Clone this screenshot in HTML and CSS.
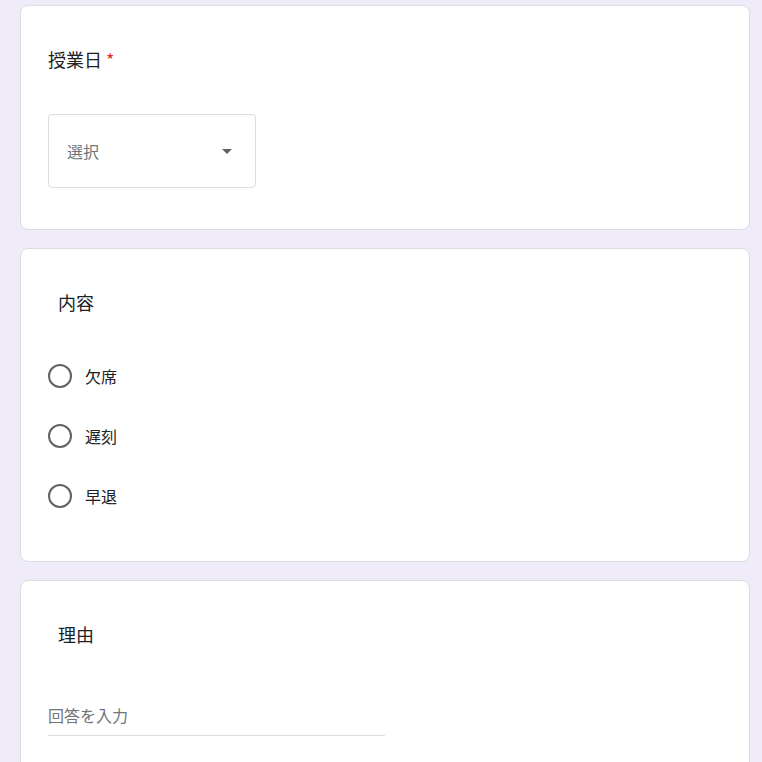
FILE: index.html
```html
<!DOCTYPE html>
<html lang="ja">
<head>
<meta charset="utf-8">
<link rel="stylesheet" href="styles.css">
</head>
<body>
<div class="page">
  <section class="card card-date">
    <div class="title">授業日<span class="req">*</span></div>
    <div class="select">
      <span class="select-text">選択</span>
      <svg class="arrow" width="24" height="24" viewBox="0 0 24 24"><path d="M7 10l5 5 5-5z" fill="#5f6368"/></svg>
    </div>
  </section>
  <section class="card card-kind">
    <div class="title indent">内容</div>
    <div class="options">
      <div class="option"><span class="radio"></span><span class="label">欠席</span></div>
      <div class="option"><span class="radio"></span><span class="label">遅刻</span></div>
      <div class="option"><span class="radio"></span><span class="label">早退</span></div>
    </div>
  </section>
  <section class="card card-reason">
    <div class="title indent">理由</div>
    <div class="input"><span class="placeholder">回答を入力</span></div>
  </section>
</div>
</body>
</html>
```
FILE: styles.css
```css
html, body {
  margin: 0;
  padding: 0;
  background: #f0ebf8;
  font-family: "Noto Sans CJK JP", "Noto Sans", sans-serif;
  color: #202124;
}
.page {
  padding: 5px 12px 0 20px;
  display: flex;
  flex-direction: column;
  gap: 18px;
  height: 762px;
  box-sizing: border-box;
  overflow: hidden;
}
.card {
  background: #fff;
  border: 1px solid #dadce0;
  border-radius: 8px;
  padding: 41px 27px 0 27px;
  flex-shrink: 0;
}
.card-date { padding-bottom: 41px; }
.card-kind { padding-bottom: 35px; }
.card-reason { padding-bottom: 40px; }
.title {
  font-size: 18px;
  line-height: 24px;
  height: 24px;
}
.title.indent { padding-left: 10px; }
.req {
  color: #d93025;
  padding-left: 4px;
}
.select {
  margin-top: 43px;
  width: 208px;
  height: 74px;
  box-sizing: border-box;
  border: 1px solid #dadce0;
  border-radius: 4px;
  display: flex;
  align-items: center;
  justify-content: space-between;
  padding: 0 16px 0 18px;
}
.select-text {
  font-size: 16px;
  color: #70757a;
}
.arrow { display: block; }
.options {
  margin-top: 32px;
  display: flex;
  flex-direction: column;
}
.option {
  height: 60px;
  display: flex;
  align-items: center;
}
.radio {
  width: 20px;
  height: 20px;
  border: 2px solid #5f6368;
  border-radius: 50%;
  flex-shrink: 0;
}
.label {
  margin-left: 13px;
  font-size: 16px;
  line-height: 24px;
}
.input {
  margin-top: 57px;
  width: 337px;
  padding-bottom: 8px;
  border-bottom: 1px solid #dadce0;
}
.placeholder {
  display: block;
  font-size: 16px;
  line-height: 24px;
  color: #70757a;
}
```
